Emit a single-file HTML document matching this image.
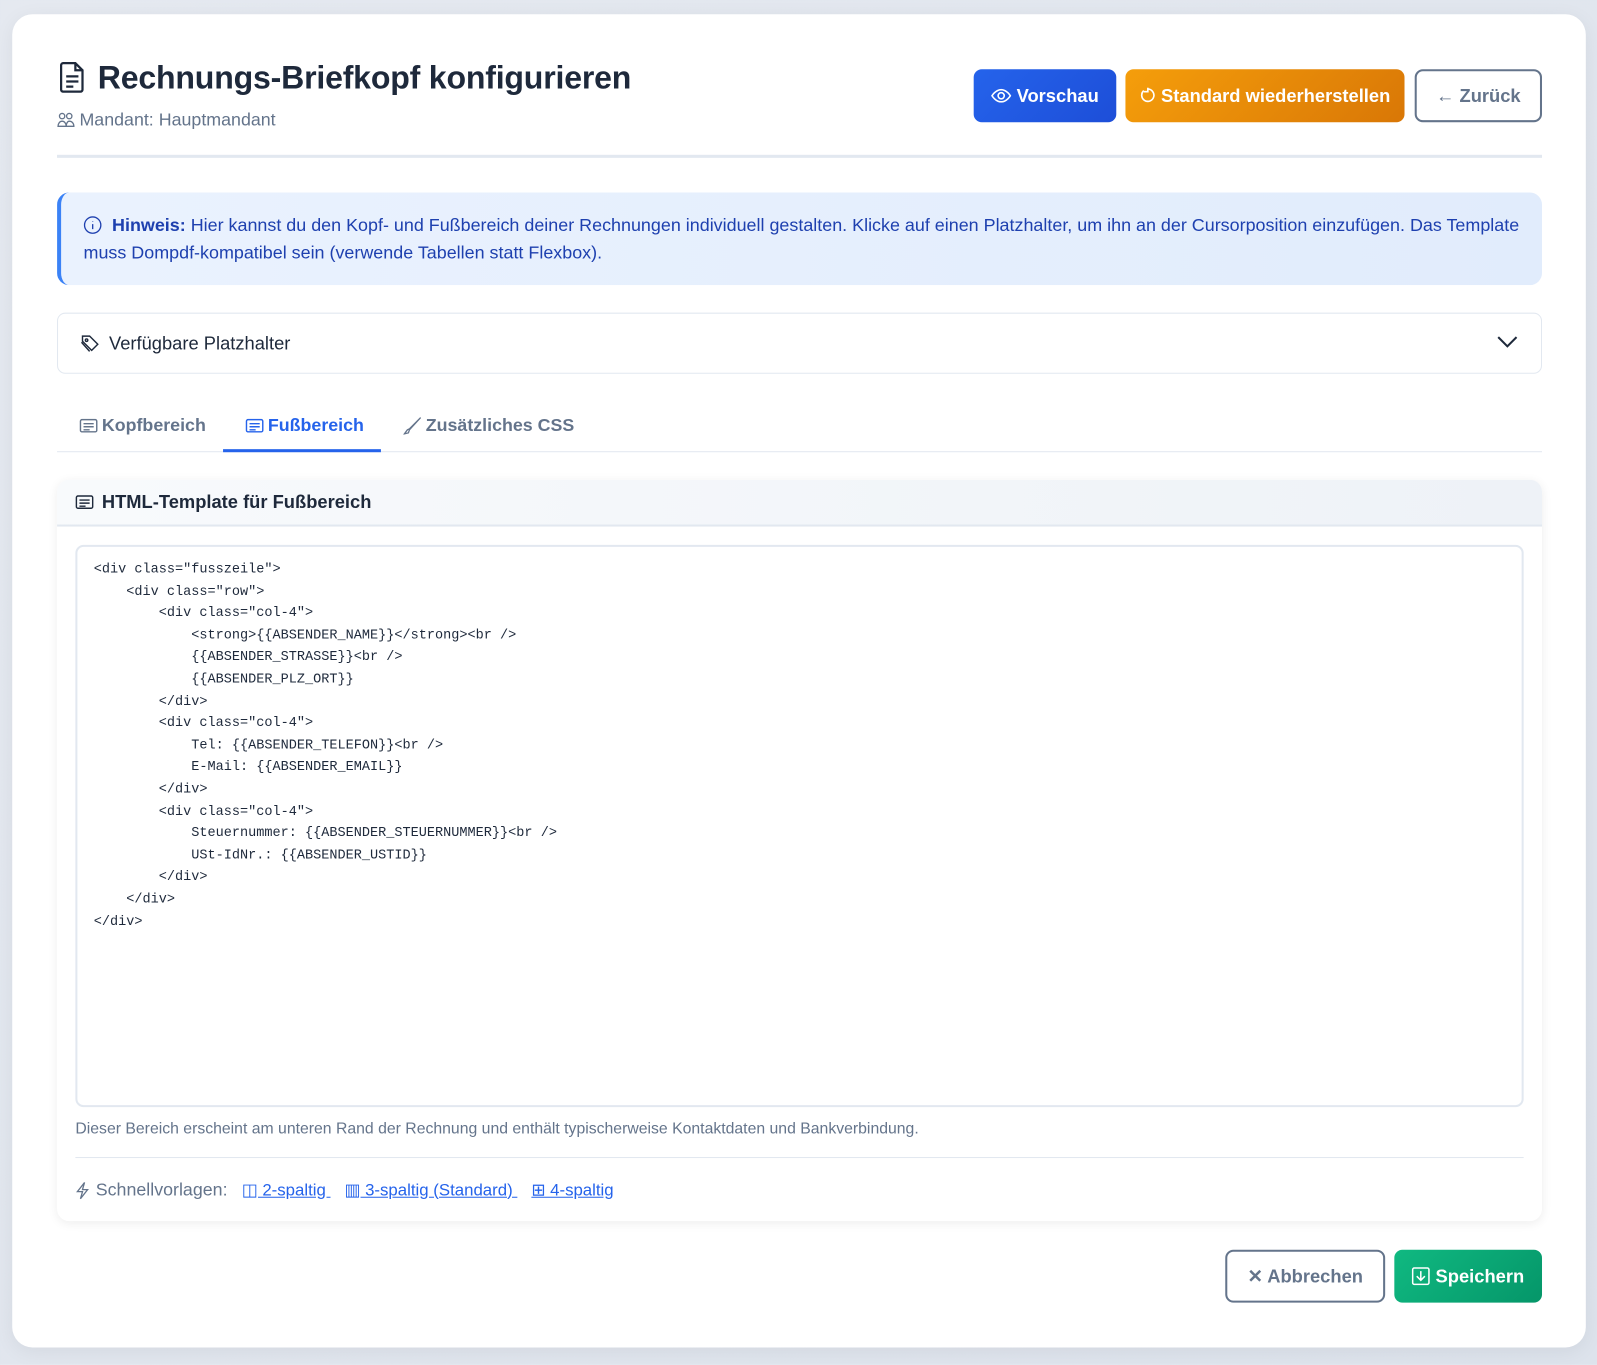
<!DOCTYPE html>
<html><head><meta charset="utf-8"><style>
*{box-sizing:border-box;margin:0;padding:0}
body{width:1597px;height:1364px;background:linear-gradient(135deg,#e5e9f0,#dde3ec);font-family:"Liberation Sans",sans-serif;color:#1e293b;position:relative;overflow:hidden}
#w{position:absolute;left:0;top:0;width:1568px;height:1340px;transform:scale(1.0185);transform-origin:0 0}
.card{position:absolute;left:12px;top:14px;width:1545px;height:1309px;background:#fff;border-radius:20px;box-shadow:0 4px 20px rgba(0,0,0,.06)}
.abs{position:absolute}
h1{position:absolute;left:96px;top:58px;font-size:31.5px;font-weight:bold;color:#1e293b;letter-spacing:-.2px}
.sub{left:56px;top:107px;font-size:17.5px;color:#64748b;display:flex;align-items:center;gap:4px}
.btn{position:absolute;height:52px;border-radius:8px;display:flex;align-items:center;justify-content:center;font-size:18px;font-weight:bold;gap:5px}
.hr{position:absolute;left:56px;width:1458px;height:3px;background:#e2e8f0}
.alert{left:56px;top:189px;width:1458px;height:91px;background:linear-gradient(90deg,#eaf2fe,#e1ecfc);border-left:4px solid #3b82f6;border-radius:12px;padding:19px 22px;font-size:17.6px;color:#1e40af;line-height:27px}
.acc{left:56px;top:307px;width:1458px;height:60px;border:1px solid #e2e8f0;border-radius:8px;display:flex;align-items:center;padding-left:22px;font-size:18px;color:#1e293b;gap:8px}
.tab{position:absolute;top:407px;font-size:17.5px;font-weight:bold;color:#64748b;display:flex;align-items:center;gap:4px}
.panel{left:56px;top:471px;width:1458px;height:728px;border-radius:12px;box-shadow:0 2px 10px rgba(0,0,0,.07);background:#fff;overflow:hidden}
.ph{height:46px;background:linear-gradient(90deg,#f8fafc,#eef2f7);border-bottom:2px solid #e2e8f0;display:flex;align-items:center;padding-left:18px;gap:8px;font-size:18px;font-weight:bold}
.ta{position:absolute;left:18px;top:64px;width:1422px;height:552px;border:2px solid #e2e8f0;border-radius:8px;padding:11px 16px;font-family:"Liberation Mono",monospace;font-size:13.3px;line-height:21.6px;white-space:pre;color:#1e293b}
a{color:#2563eb;text-decoration:underline}
</style></head><body><div id="w">
<div class="card"></div>
<svg class="abs" style="left:58px;top:60px" width="26" height="32" viewBox="0 0 26 32" fill="none" stroke="#1e293b" stroke-width="2.2"><path d="M4 2h12l7 7v19a2 2 0 0 1-2 2H4a2 2 0 0 1-2-2V4a2 2 0 0 1 2-2z"/><path d="M16 2v7h7M7 15h12M7 20h12M7 25h7"/></svg>
<h1>Rechnungs-Briefkopf konfigurieren</h1>
<div class="abs sub"><svg width="18" height="16" viewBox="0 0 18 16" fill="none" stroke="#64748b" stroke-width="1.3"><circle cx="5" cy="4" r="2.6"/><circle cx="12" cy="4" r="2.6"/><path d="M1 14c0-3 2-5 4-5s4 2 4 5zM9 14c0-3 1.5-5 3-5 2.5 0 4.5 2 4.5 5z"/></svg>Mandant: Hauptmandant</div>
<div class="btn" style="left:956px;top:68px;width:140px;background:linear-gradient(135deg,#2563eb,#1d4ed8);color:#fff"><svg width="20" height="14" viewBox="0 0 20 14" fill="none" stroke="#fff" stroke-width="1.6"><path d="M1 7s3.5-6 9-6 9 6 9 6-3.5 6-9 6-9-6-9-6z"/><circle cx="10" cy="7" r="3"/></svg>Vorschau</div>
<div class="btn" style="left:1105px;top:68px;width:274px;background:linear-gradient(135deg,#f59e0b,#d97706);color:#fff"><svg width="16" height="16" viewBox="0 0 16 16" fill="none" stroke="#fff" stroke-width="1.6"><path d="M4 3a6 6 0 1 0 4-1.5"/><path d="M8 0v4H4" /></svg>Standard wiederherstellen</div>
<div class="btn" style="left:1389px;top:68px;width:125px;border:2px solid #64748b;color:#64748b;font-weight:bold">← Zurück</div>
<div class="hr" style="top:152px"></div>
<div class="abs alert"><svg width="18" height="18" viewBox="0 0 18 18" fill="none" stroke="#1e40af" stroke-width="1.3" style="vertical-align:-3px;margin-right:10px"><circle cx="9" cy="9" r="8"/><path d="M9 8v5M9 5v.5"/></svg><b>Hinweis:</b> Hier kannst du den Kopf- und Fußbereich deiner Rechnungen individuell gestalten. Klicke auf einen Platzhalter, um ihn an der Cursorposition einzufügen. Das Template muss Dompdf-kompatibel sein (verwende Tabellen statt Flexbox).</div>
<div class="abs acc"><svg width="20" height="18" viewBox="0 0 20 18" fill="none" stroke="#1e293b" stroke-width="1.4"><path d="M2 2h7l8 8-6 6-9-9z"/><circle cx="6" cy="6" r="1.2"/><path d="M1 8l8 9"/></svg>Verfügbare Platzhalter</div>
<svg class="abs" style="left:1470px;top:330px" width="20" height="12" viewBox="0 0 20 12" fill="none" stroke="#1e293b" stroke-width="2"><path d="M1 1l9 9 9-9"/></svg>
<div class="tab" style="left:78px"><svg width="18" height="14" viewBox="0 0 18 14" fill="none" stroke="#64748b" stroke-width="1.4"><rect x="1" y="1" width="16" height="12" rx="1.5"/><path d="M4 5h10M4 8h10M4 11h6"/></svg>Kopfbereich</div>
<div class="tab" style="left:241px;color:#2563eb"><svg width="18" height="14" viewBox="0 0 18 14" fill="none" stroke="#2563eb" stroke-width="1.4"><rect x="1" y="1" width="16" height="12" rx="1.5"/><path d="M4 5h10M4 8h10M4 11h6"/></svg>Fußbereich</div>
<div class="tab" style="left:396px"><svg width="18" height="18" viewBox="0 0 18 18" fill="none" stroke="#64748b" stroke-width="1.3"><path d="M17 1L6 12l-2 1-3 4 4-1 1-3L17 1z"/></svg>Zusätzliches CSS</div>
<div class="abs" style="left:56px;top:443px;width:1458px;height:1px;background:#e2e8f0"></div>
<div class="abs" style="left:219px;top:441px;width:155px;height:3px;background:#2563eb"></div>
<div class="abs panel">
<div class="ph"><svg width="18" height="14" viewBox="0 0 18 14" fill="none" stroke="#1e293b" stroke-width="1.4"><rect x="1" y="1" width="16" height="12" rx="1.5"/><path d="M4 5h10M4 8h10M4 11h6"/></svg>HTML-Template für Fußbereich</div>
<div class="ta">&lt;div class="fusszeile"&gt;
    &lt;div class="row"&gt;
        &lt;div class="col-4"&gt;
            &lt;strong&gt;{{ABSENDER_NAME}}&lt;/strong&gt;&lt;br /&gt;
            {{ABSENDER_STRASSE}}&lt;br /&gt;
            {{ABSENDER_PLZ_ORT}}
        &lt;/div&gt;
        &lt;div class="col-4"&gt;
            Tel: {{ABSENDER_TELEFON}}&lt;br /&gt;
            E-Mail: {{ABSENDER_EMAIL}}
        &lt;/div&gt;
        &lt;div class="col-4"&gt;
            Steuernummer: {{ABSENDER_STEUERNUMMER}}&lt;br /&gt;
            USt-IdNr.: {{ABSENDER_USTID}}
        &lt;/div&gt;
    &lt;/div&gt;
&lt;/div&gt;</div>
<div class="abs" style="left:18px;top:629px;font-size:15.5px;color:#64748b">Dieser Bereich erscheint am unteren Rand der Rechnung und enthält typischerweise Kontaktdaten und Bankverbindung.</div>
<div class="abs" style="left:18px;top:665px;width:1422px;height:1px;background:#e2e8f0"></div>
<div class="abs" style="left:18px;top:687px;font-size:17.5px;color:#64748b;display:flex;align-items:center;gap:6px;white-space:nowrap">
<svg width="14" height="18" viewBox="0 0 14 18" fill="none" stroke="#64748b" stroke-width="1.3"><path d="M9 1L2 10h5l-2 7 7-9H7z"/></svg>Schnellvorlagen:
<span style="margin-left:8px;font-size:16.5px"><a>◫ 2-spaltig </a>&nbsp;&nbsp; <a>▥ 3-spaltig (Standard) </a>&nbsp;&nbsp; <a>⊞ 4-spaltig</a></span></div>
</div>
<div class="btn" style="left:1203px;top:1227px;width:157px;border:2px solid #64748b;color:#64748b">✕ Abbrechen</div>
<div class="btn" style="left:1369px;top:1227px;width:145px;background:linear-gradient(135deg,#10b981,#059669);color:#fff"><svg width="18" height="18" viewBox="0 0 18 18" fill="none" stroke="#fff" stroke-width="1.5"><rect x="1" y="1" width="16" height="16" rx="1.5"/><path d="M9 4v8M5 9l4 4 4-4"/></svg>Speichern</div>
</div></body></html>
